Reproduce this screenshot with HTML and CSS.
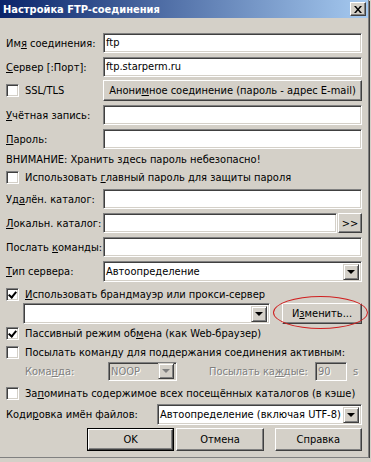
FILE: index.html
```html
<!DOCTYPE html>
<html lang="ru">
<head>
    <meta charset="UTF-8">
    <title>Настройка FTP-соединения</title>
    <link rel="stylesheet" href="styles.css">
</head>
<body>
    <div class="window">
        <div class="titlebar">
            <span class="title">Настройка FTP-соединения</span>
            <span class="close-btn">
                <svg width="8" height="7" viewBox="0 0 8 7"><path d="M0 0h2l2 2.5L6 0h2L5 3.5 8 7H6L4 4.5 2 7H0l3-3.5z" fill="#000"/></svg>
            </span>
        </div>

        <div class="content">
            <div class="row r-edit">
                <span class="lbl">Им<u>я</u> соединения:</span>
                <div class="edit">ftp</div>
            </div>
            <div class="row r-edit">
                <span class="lbl"><u>С</u>ервер [:Порт]:</span>
                <div class="edit">ftp.starperm.ru</div>
            </div>
            <div class="row r-btn m3">
                <span class="lbl chk-lbl"><span class="chk"></span><span>SSL/TLS</span></span>
                <div class="btn wide">Анони<u>м</u>ное соединение (пароль - адрес E-mail)</div>
            </div>
            <div class="row r-edit">
                <span class="lbl"><u>У</u>чётная запись:</span>
                <div class="edit"></div>
            </div>
            <div class="row r-edit">
                <span class="lbl"><u>П</u>ароль:</span>
                <div class="edit"></div>
            </div>
            <div class="row r-text m3">ВНИМАНИЕ: Хранить здесь пароль небезопасно!</div>
            <div class="row r-chk">
                <span class="chk"></span><span>Использовать <u>г</u>лавный пароль для защиты пароля</span>
            </div>
            <div class="row r-edit m5">
                <span class="lbl">Уд<u>а</u>лён. каталог:</span>
                <div class="edit"></div>
            </div>
            <div class="row r-edit">
                <span class="lbl"><u>Л</u>окальн. каталог:</span>
                <div class="edit"></div>
                <div class="btn browse">&gt;&gt;</div>
            </div>
            <div class="row r-edit">
                <span class="lbl">Послать <u>к</u>оманды:</span>
                <div class="edit"></div>
            </div>
            <div class="row r-btn">
                <span class="lbl"><u>Т</u>ип сервера:</span>
                <div class="combo">
                    <span class="combo-text">Автоопределение</span>
                    <span class="arrow"></span>
                </div>
            </div>
            <div class="row r-chk m5">
                <span class="chk checked"></span><span><u>И</u>спользовать брандмауэр или прокси-сервер</span>
            </div>
            <div class="row r-proxy m1">
                <div class="combo proxy">
                    <span class="combo-text"></span>
                    <span class="arrow"></span>
                </div>
                <div class="btn change">И<u>з</u>менить...</div>
                <span class="marker"></span>
            </div>
            <div class="row r-chk m1">
                <span class="chk checked"></span><span>Пассивный режим об<u>м</u>ена (как Web-браузер)</span>
            </div>
            <div class="row r-chk m5">
                <span class="chk"></span><span>Посылать коман<u>д</u>у для поддержания соединения активным:</span>
            </div>
            <div class="row r-keep m2 disabled">
                <span class="lbl-cmd">Кома<u>н</u>да:</span>
                <div class="combo noop">
                    <span class="combo-text">NOOP</span>
                    <span class="arrow"></span>
                </div>
                <span class="lbl-every">Посылать ка<u>ж</u>дые:</span>
                <div class="edit secs">90</div>
                <span class="unit">s</span>
            </div>
            <div class="row r-chk m5">
                <span class="chk"></span><span>За<u>п</u>оминать содержимое всех посещённых каталогов (в кэше)</span>
            </div>
            <div class="row r-btn">
                <span class="lbl enc-lbl">Коди<u>р</u>овка имён файлов:</span>
                <div class="combo">
                    <span class="combo-text">Автоопределение (включая UTF-8)</span>
                    <span class="arrow"></span>
                </div>
            </div>
            <div class="row r-buttons m3">
                <div class="btn default">OK</div>
                <div class="btn">Отмена</div>
                <div class="btn help">Справка</div>
            </div>
        </div>
    </div>
</body>
</html>
```

FILE: styles.css
```css
body {
    margin: 0;
    background-color: #D4D0C8;
    font-family: "DejaVu Sans", "Liberation Sans", sans-serif;
    font-stretch: condensed;
    font-size: 11px;
    color: #000;
}
u {
    text-decoration: underline;
    text-underline-offset: 1px;
}
.window {
    width: 368px;
    height: 457px;
    border-right: 1px solid #808080;
    border-bottom: 1px solid #808080;
    box-shadow: 1px 1px 0 #404040;
    background-color: #D4D0C8;
}
.titlebar {
    height: 18px;
    display: flex;
    align-items: center;
    justify-content: space-between;
    padding: 0 2px 0 3px;
    background: linear-gradient(to right, #0A246A, #A6CAF0);
}
.title {
    color: #fff;
    font-weight: bold;
}
.close-btn {
    width: 12px;
    height: 10px;
    display: flex;
    align-items: center;
    justify-content: center;
    background-color: #D4D0C8;
    border: 1px solid;
    border-color: #fff #404040 #404040 #fff;
    box-shadow: inset -1px -1px 0 #808080;
    padding: 1px;
}
.content {
    display: flex;
    flex-direction: column;
    gap: 4px;
    padding: 15px 6px 0 6px;
}
.row {
    display: flex;
    align-items: center;
    position: relative;
}
/* small corrections of the 4px row spacing */
.m1 {
    margin-top: -3px;
}
.m2 {
    margin-top: -2px;
}
.m3 {
    margin-top: -1px;
}
.m5 {
    margin-top: 1px;
}
.r-edit {
    height: 20px;
}
.r-btn {
    height: 21px;
}
.r-text {
    height: 14px;
}
.r-chk {
    height: 14px;
}
.lbl {
    width: 97px;
    flex-shrink: 0;
    white-space: nowrap;
}
.chk-lbl {
    display: flex;
    align-items: center;
}
.chk {
    width: 11px;
    height: 11px;
    flex-shrink: 0;
    margin-right: 6px;
    background-color: #fff;
    border: 1px solid;
    border-color: #808080 #fff #fff #808080;
    box-shadow: inset 1px 1px 0 #404040, inset -1px -1px 0 #D4D0C8;
    position: relative;
}
.checked::after {
    content: "";
    position: absolute;
    left: 3px;
    top: 1px;
    width: 3px;
    height: 6px;
    border: solid #000;
    border-width: 0 2px 2px 0;
    transform: rotate(40deg);
}
.edit {
    flex: 1;
    height: 18px;
    line-height: 18px;
    padding: 0 2px;
    background-color: #fff;
    border: 1px solid;
    border-color: #808080 #fff #fff #808080;
    box-shadow: inset 1px 1px 0 #404040, inset -1px -1px 0 #D4D0C8;
    white-space: nowrap;
}
.btn {
    height: 19px;
    display: flex;
    align-items: center;
    justify-content: center;
    background-color: #D4D0C8;
    border: 1px solid;
    border-color: #fff #404040 #404040 #fff;
    box-shadow: inset -1px -1px 0 #808080;
    white-space: nowrap;
}
.wide {
    flex: 1;
}
.browse {
    width: 22px;
    height: 18px;
    margin-left: 1px;
}
.combo {
    flex: 1;
    height: 19px;
    display: flex;
    align-items: center;
    padding: 0 2px 0 2px;
    background-color: #fff;
    border: 1px solid;
    border-color: #808080 #fff #fff #808080;
    box-shadow: inset 1px 1px 0 #404040, inset -1px -1px 0 #D4D0C8;
}
.combo-text {
    flex: 1;
    white-space: nowrap;
}
.arrow {
    width: 14px;
    height: 14px;
    position: relative;
    background-color: #D4D0C8;
    border: 1px solid;
    border-color: #D4D0C8 #404040 #404040 #D4D0C8;
    box-shadow: inset 1px 1px 0 #fff, inset -1px -1px 0 #808080;
}
.arrow::after {
    content: "";
    position: absolute;
    left: 3px;
    top: 5px;
    border-style: solid;
    border-width: 4px 4px 0 4px;
    border-color: #000 transparent transparent transparent;
}
.r-proxy {
    height: 23px;
    padding-left: 17px;
}
.proxy {
    flex: none;
    width: 241px;
}
.change {
    width: 80px;
    margin-left: 12px;
}
.marker {
    position: absolute;
    left: 267px;
    top: -6px;
    width: 93px;
    height: 31px;
    border: 1px solid #D02020;
    border-radius: 50%;
}
.r-keep {
    height: 20px;
}
.disabled {
    color: #808080;
    text-shadow: 1px 1px 0 #fff;
}
.lbl-cmd {
    width: 83px;
    padding-left: 19px;
    flex-shrink: 0;
}
.noop {
    flex: none;
    height: 17px;
    width: 63px;
    background-color: #D4D0C8;
}
.noop .arrow::after {
    border-color: #808080 transparent transparent transparent;
}
.lbl-every {
    margin-left: 32px;
    width: 106px;
}
.secs {
    flex: none;
    width: 26px;
    height: 17px;
    line-height: 17px;
    background-color: #D4D0C8;
}
.unit {
    margin-left: 6px;
}
.enc-lbl {
    width: 151px;
}
.r-buttons {
    height: 23px;
    padding-left: 81px;
    gap: 2px;
}
.r-buttons .btn {
    width: 86px;
    height: 21px;
}
.r-buttons .default {
    width: 84px;
    height: 19px;
    outline: 1px solid #000;
    outline-offset: 0;
    margin: 0 1px;
}
.r-buttons .help {
    margin-left: 9px;
}
```
